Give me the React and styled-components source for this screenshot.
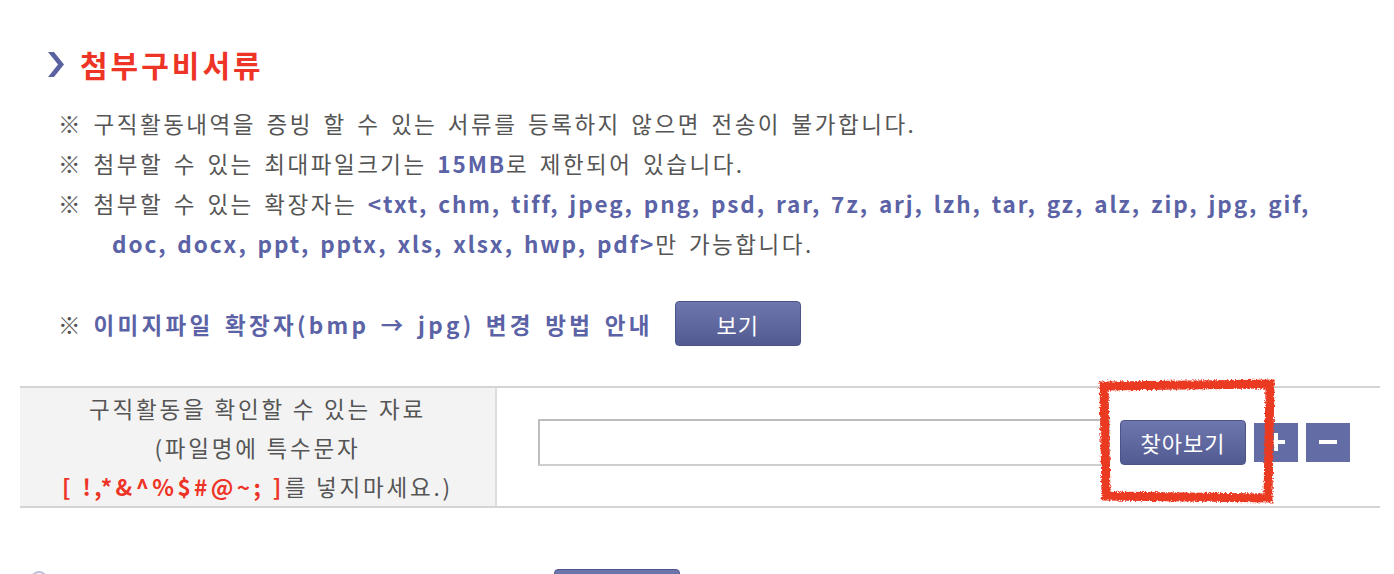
import React from 'react';
import styled, { createGlobalStyle } from 'styled-components';

const GlobalStyle = createGlobalStyle`
    html, body {
        margin: 0;
        padding: 0;
        background: #fff;
        overflow: hidden;
    }
    body {
        font-family: "Noto Sans CJK KR", "Noto Sans", sans-serif;
        color: #555;
    }
`;

const Page = styled.div`
    position: relative;
    width: 1394px;
    height: 574px;
    overflow: hidden;
    padding: 44px 14px 0 20px;
    box-sizing: border-box;
`;

const Title = styled.h2`
    display: flex;
    align-items: center;
    gap: 16px;
    margin: 0 0 19px 28px;
    font-size: 30px;
    font-weight: 700;
    line-height: 40px;
    letter-spacing: 3px;
    color: #ee3426;
`;

const Notes = styled.ul`
    list-style: none;
    margin: 0 0 0 38px;
    padding: 0;
    font-size: 22.5px;
    line-height: 40px;
    letter-spacing: 2.5px;
    word-spacing: 3px;
`;

const Note = styled.li`
    padding-left: 54px;
    text-indent: -54px;
    margin-bottom: ${p => p.$gap || 0}px;
`;

const Strong = styled.b`
    color: #5b63a6;
    font-weight: 700;
    letter-spacing: ${p => p.$ls || 1.9}px;
`;

const GuideRow = styled.div`
    display: flex;
    align-items: center;
    gap: 22px;
    margin: 0 0 0 38px;
    font-size: 22.5px;
    letter-spacing: 2.5px;
    word-spacing: 3px;
`;

const Button = styled.button`
    width: ${p => p.$w || 126}px;
    height: ${p => p.$h || 45}px;
    border: 1px solid #4d5588;
    border-radius: 4px;
    background: linear-gradient(#6e77ad, #525a92);
    color: #fff;
    font-family: inherit;
    font-size: 22px;
    letter-spacing: 1px;
    padding: 0;
    cursor: pointer;
`;

const Table = styled.div`
    display: grid;
    grid-template-columns: 477px 1fr;
    margin-top: 40px;
    border-top: 2px solid #d4d4d4;
    border-bottom: 2px solid #d4d4d4;
`;

const HeadCell = styled.div`
    background: #f3f3f3;
    border-right: 2px solid #dedede;
    text-align: center;
    font-size: 22.5px;
    line-height: 39px;
    padding: 1px 0 0;
    letter-spacing: 2.8px;
`;

const Red = styled.b`
    color: #ee3426;
    font-weight: 700;
    letter-spacing: 3.4px;
`;

const FileCell = styled.div`
    display: flex;
    align-items: center;
    padding: 0 0 10px 41px;
    gap: 8px;
`;

const FileInput = styled.div`
    width: 572px;
    height: 47px;
    box-sizing: border-box;
    border: 2px solid #cfcfcf;
    border-top-color: #bdbdbd;
    border-left-color: #bdbdbd;
    margin-right: 2px;
`;

const SquareButton = styled.button`
    width: 44px;
    height: 39px;
    border: none;
    background: #646ca6;
    display: flex;
    align-items: center;
    justify-content: center;
    padding: 0;
`;

const NextRow = styled.div`
    display: flex;
    align-items: flex-start;
    margin: 61px 0 0 10px;
    gap: 506px;
`;

const Bullet = styled.span`
    width: 14px;
    height: 14px;
    margin-top: 2px;
    border-radius: 50%;
    border: 2px solid #b9bcd6;
`;

const Scribble = styled.svg`
    position: absolute;
    left: 1094px;
    top: 376px;
    pointer-events: none;
`;

export default function App () {
    return (
        <Page>
            <GlobalStyle />
            <Title>
                <svg width="16" height="25" viewBox="0 0 16 25">
                    <path d="M0 0 H6 L16 12.5 L6 25 H0 L10 12.5 Z" fill="#5a62a0" />
                </svg>
                첨부구비서류
            </Title>
            <Notes>
                <Note>※ 구직활동내역을 증빙 할 수 있는 서류를 등록하지 않으면 전송이 불가합니다.</Note>
                <Note>※ 첨부할 수 있는 최대파일크기는 <Strong>15MB</Strong>로 제한되어 있습니다.</Note>
                <Note $gap={38}>
                    ※ 첨부할 수 있는 확장자는 <Strong>&lt;txt, chm, tiff, jpeg, png, psd, rar, 7z, arj, lzh, tar, gz, alz, zip, jpg, gif,<br />
                    doc, docx, ppt, pptx, xls, xlsx, hwp, pdf&gt;</Strong>만 가능합니다.
                </Note>
            </Notes>
            <GuideRow>
                <span>※ <Strong $ls={3.3}>이미지파일 확장자(bmp → jpg) 변경 방법 안내</Strong></span>
                <Button>보기</Button>
            </GuideRow>
            <Table>
                <HeadCell>
                    구직활동을 확인할 수 있는 자료<br />
                    (파일명에 특수문자<br />
                    <Red>[ !,*&amp;^%$#@~; ]</Red>를 넣지마세요.)
                </HeadCell>
                <FileCell>
                    <FileInput />
                    <Button>찾아보기</Button>
                    <SquareButton>
                        <svg width="18" height="18" viewBox="0 0 18 18"><path d="M7 0h4v7h7v4h-7v7H7v-7H0V7h7z" fill="#fff" /></svg>
                    </SquareButton>
                    <SquareButton>
                        <svg width="18" height="18" viewBox="0 0 18 18"><path d="M0 7h18v4H0z" fill="#fff" /></svg>
                    </SquareButton>
                </FileCell>
            </Table>
            <NextRow>
                <Bullet />
                <Button />
            </NextRow>
            <Scribble width="190" height="132" viewBox="0 0 190 132">
                <defs>
                    <filter id="rough">
                        <feTurbulence type="fractalNoise" baseFrequency="0.6" numOctaves="2" result="n" />
                        <feDisplacementMap in="SourceGraphic" in2="n" scale="5" />
                    </filter>
                </defs>
                <path d="M10 10 L176 8 L174 122 L12 120 Z" fill="none" stroke="#ea3a24" strokeWidth="9" filter="url(#rough)" />
            </Scribble>
        </Page>
    );
}
